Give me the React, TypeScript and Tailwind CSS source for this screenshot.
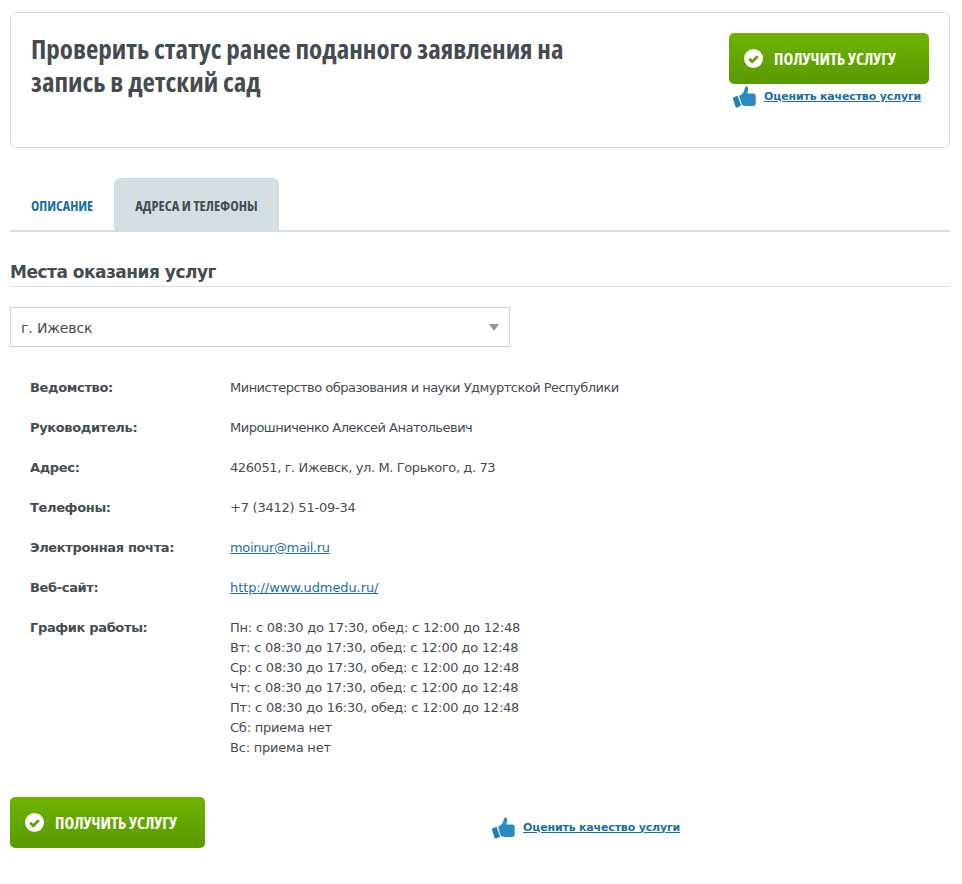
const bodyFont = "font-['Tahoma','DejaVu_Sans',sans-serif]";

function CheckCircle() {
  return (
    <svg width="19" height="19" viewBox="0 0 19 19" className="shrink-0">
      <circle cx="9.5" cy="9.5" r="9.5" fill="#fff" />
      <path d="M5.2 9.8l3 3 5.6-5.6" fill="none" stroke="#5ea303" strokeWidth="2.8" />
    </svg>
  );
}

function Thumb() {
  return (
    <svg width="23" height="22" viewBox="0 0 23 22" className="shrink-0">
      <path d="M0.3 11.5l4.2-1.8 3.6 9.8-3.6 1.9c-1 .4-1.7-.1-2.1-1.1L0 13c-.2-.7-.1-1.2.3-1.5z" fill="#1f7fb8" />
      <path d="M6 9.8c2.6-1.2 4.4-3 5.2-5.4.4-1.5.8-3.7 2.2-3.9 1.7-.2 2.2 1.7 1.7 3.7-.2 1-.6 2-.8 3.2h6.2c1.4 0 2.2.8 2.2 2.1v8c0 1.5-1 2.5-2.5 2.5H12.4c-1.4 0-2.6-.6-3.6-1.2L6 9.8z" fill="#2a8bc4" />
    </svg>
  );
}

function ServiceButton({ width }: { width: string }) {
  return (
    <a className={`flex h-[51px] items-center gap-[11px] rounded-[5px] bg-gradient-to-b from-[#6fb300] to-[#589a00] pl-[15px] ${width}`}>
      <CheckCircle />
      <span className="font-['Open_Sans',sans-serif] text-[16.5px] font-bold tracking-normal text-white [font-stretch:75%]">ПОЛУЧИТЬ УСЛУГУ</span>
    </a>
  );
}

function RateLink({ className }: { className: string }) {
  return (
    <a className={`flex items-center gap-2 ${className}`}>
      <Thumb />
      <span className="text-[11px] font-bold tracking-[-0.17px] text-[#1c6fa0] underline">Оценить качество услуги</span>
    </a>
  );
}

function Row({ label, children, tracking }: { label: string; children: React.ReactNode; tracking?: string }) {
  return (
    <div className="flex pb-5">
      <div className="w-[200px] shrink-0 font-bold text-[#444c52]">{label}</div>
      <div className={`text-[#444c52] ${tracking ?? ''}`}>{children}</div>
    </div>
  );
}

const schedule = [
  'Пн: с 08:30 до 17:30, обед: с 12:00 до 12:48',
  'Вт: с 08:30 до 17:30, обед: с 12:00 до 12:48',
  'Ср: с 08:30 до 17:30, обед: с 12:00 до 12:48',
  'Чт: с 08:30 до 17:30, обед: с 12:00 до 12:48',
  'Пт: с 08:30 до 16:30, обед: с 12:00 до 12:48',
  'Сб: приема нет',
  'Вс: приема нет',
];

export default function App() {
  return (
    <div className={`h-[884px] bg-white pl-[10px] pr-3 pt-3 text-[13px] leading-5 tracking-[-0.35px] ${bodyFont}`}>
      {/* Header card */}
      <div className="flex h-[136px] justify-between rounded-md border border-[#d5dfe3] pl-5 pr-5 pt-5">
        <h1 className="-mt-[1px] w-[560px] font-['Open_Sans',sans-serif] text-[27px] font-bold leading-[33px] tracking-normal text-[#444c52] [font-stretch:75%]">
          Проверить статус ранее поданного заявления на запись в детский сад
        </h1>
        <div className="w-[200px]">
          <ServiceButton width="w-[200px]" />
          <RateLink className="mt-[2px] pl-[4px]" />
        </div>
      </div>

      {/* Tabs */}
      <div className="mt-[30px] flex h-[54px] border-b-2 border-[#d5dfe3] font-['Open_Sans',sans-serif] text-[14.4px] font-bold tracking-normal [font-stretch:75%]">
        <div className="flex h-[52px] w-[104px] items-center justify-center pt-1 text-[14px] text-[#1c6fa0]">ОПИСАНИЕ</div>
        <div className="flex h-[52px] w-[165px] items-center justify-center rounded-t-md bg-[#d5dfe3] pt-1 text-[#444c52]">АДРЕСА И ТЕЛЕФОНЫ</div>
      </div>

      {/* Section heading */}
      <h2 className="mt-[28px] border-b border-[#d5dfe3] pb-[2px] text-[17px] font-bold leading-[24px] tracking-[-0.5px] text-[#444c52]">Места оказания услуг</h2>

      {/* City select */}
      <div className="mt-5 flex h-10 w-[500px] items-center justify-between border border-[#c5d3da] pl-[10px] pr-[10px] pt-[1px] text-[14px] tracking-[-0.1px] text-[#444c52]">
        <span>г. Ижевск</span>
        <span className="h-0 w-0 border-x-[5px] border-t-[7px] border-x-transparent border-t-[#8b999f]" />
      </div>

      {/* Details */}
      <div className="mt-[31px] pl-5">
        <Row label="Ведомство:" tracking="tracking-[-0.52px]">Министерство образования и науки Удмуртской Республики</Row>
        <Row label="Руководитель:" tracking="tracking-[-0.5px]">Мирошниченко Алексей Анатольевич</Row>
        <Row label="Адрес:" tracking="tracking-[-0.4px]">426051, г. Ижевск, ул. М. Горького, д. 73</Row>
        <Row label="Телефоны:" tracking="tracking-[-0.23px]">+7 (3412) 51-09-34</Row>
        <Row label="Электронная почта:">
          <a className="text-[#1c6fa0] underline">moinur@mail.ru</a>
        </Row>
        <Row label="Веб-сайт:" tracking="tracking-[-0.1px]">
          <a className="text-[#1c6fa0] underline">http://www.udmedu.ru/</a>
        </Row>
        <Row label="График работы:" tracking="tracking-[-0.21px]">
          {schedule.map((line) => (
            <div key={line}>{line}</div>
          ))}
        </Row>
      </div>

      {/* Bottom actions */}
      <div className="mt-[19px] flex items-center">
        <ServiceButton width="w-[195px]" />
        <RateLink className="ml-[287px] mt-[10px]" />
      </div>
    </div>
  );
}
